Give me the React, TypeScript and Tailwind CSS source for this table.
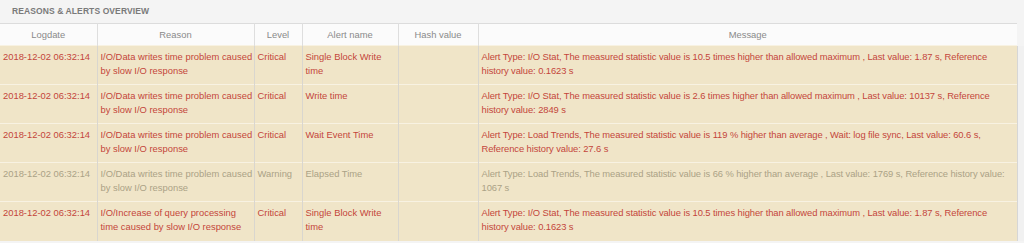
import React from "react";

type Row = {
  date: string;
  reason: string;
  level: "Critical" | "Warning";
  alert: string;
  hash: string;
  message: [string, string];
};

const rows: Row[] = [
  {
    date: "2018-12-02 06:32:14",
    reason: "I/O/Data writes time problem caused by slow I/O response",
    level: "Critical",
    alert: "Single Block Write time",
    hash: "",
    message: [
      "Alert Type: I/O Stat, The measured statistic value is 10.5 times higher than allowed maximum , Last value: 1.87 s, Reference",
      "history value: 0.1623 s",
    ],
  },
  {
    date: "2018-12-02 06:32:14",
    reason: "I/O/Data writes time problem caused by slow I/O response",
    level: "Critical",
    alert: "Write time",
    hash: "",
    message: [
      "Alert Type: I/O Stat, The measured statistic value is 2.6 times higher than allowed maximum , Last value: 10137 s, Reference",
      "history value: 2849 s",
    ],
  },
  {
    date: "2018-12-02 06:32:14",
    reason: "I/O/Data writes time problem caused by slow I/O response",
    level: "Critical",
    alert: "Wait Event Time",
    hash: "",
    message: [
      "Alert Type: Load Trends, The measured statistic value is 119 % higher than average , Wait: log file sync, Last value: 60.6 s,",
      "Reference history value: 27.6 s",
    ],
  },
  {
    date: "2018-12-02 06:32:14",
    reason: "I/O/Data writes time problem caused by slow I/O response",
    level: "Warning",
    alert: "Elapsed Time",
    hash: "",
    message: [
      "Alert Type: Load Trends, The measured statistic value is 66 % higher than average , Last value: 1769 s, Reference history value:",
      "1067 s",
    ],
  },
  {
    date: "2018-12-02 06:32:14",
    reason: "I/O/Increase of query processing time caused by slow I/O response",
    level: "Critical",
    alert: "Single Block Write time",
    hash: "",
    message: [
      "Alert Type: I/O Stat, The measured statistic value is 10.5 times higher than allowed maximum , Last value: 1.87 s, Reference",
      "history value: 0.1623 s",
    ],
  },
];

const headers = ["Logdate", "Reason", "Level", "Alert name", "Hash value", "Message"];

export default function App() {
  return (
    <div
      className="w-[1024px] h-[243px] overflow-hidden bg-[#f4f4f4]"
      style={{ fontFamily: '"Liberation Sans", Arial, sans-serif' }}
    >
      {/* Panel title */}
      <div className="h-[23px] pl-[12px] flex items-center text-[8.5px] font-bold uppercase tracking-[0.1px] text-[#7a7a7a]">
        Reasons &amp; Alerts Overview
      </div>

      <div className="flex">
        <table className="w-[1017px] table-fixed border-collapse text-[9.4px] leading-[14px]">
          <colgroup>
            <col className="w-[97px]" />
            <col className="w-[157px]" />
            <col className="w-[48px]" />
            <col className="w-[96px]" />
            <col className="w-[80px]" />
            <col />
          </colgroup>
          <thead>
            <tr className="h-[22px] bg-[#fbfbfb] border-t border-[#dcdcdc]">
              {headers.map((h) => (
                <th
                  key={h}
                  className="font-normal text-center text-[#8a8a8a] border-l border-[#dedede] first:border-l-0 px-[3px]"
                >
                  {h}
                </th>
              ))}
            </tr>
          </thead>
          <tbody>
            {rows.map((r, i) => {
              const tone = r.level === "Critical" ? "text-[#c4463b]" : "text-[#aba286]";
              return (
                <tr key={i} className={`h-[39px] bg-[#f0e5c8] border-t border-[#f8f2e2] ${tone}`}>
                  <td className="align-top pt-[4px] pl-[3px] pr-0 whitespace-nowrap">{r.date}</td>
                  <td className="align-top pt-[4px] pl-[3px] pr-0 border-l border-[#d9d6cf]">{r.reason}</td>
                  <td className="align-top pt-[4px] pl-[3px] pr-0 border-l border-[#d9d6cf]">{r.level}</td>
                  <td className="align-top pt-[4px] pl-[3px] pr-0 border-l border-[#d9d6cf]">{r.alert}</td>
                  <td className="align-top pt-[4px] pl-[3px] pr-0 border-l border-[#d9d6cf]">{r.hash}</td>
                  <td className="align-top pt-[4px] pl-[3px] pr-0 border-l border-[#d9d6cf] whitespace-nowrap overflow-hidden tracking-[-0.08px]">
                    {r.message[0]}
                    <br />
                    {r.message[1]}
                  </td>
                </tr>
              );
            })}
          </tbody>
        </table>
        {/* scrollbar track */}
        <div className="flex-1 mt-[23px] border-l border-[#d6d6d6] bg-[#f1f1f1]" />
      </div>
    </div>
  );
}
